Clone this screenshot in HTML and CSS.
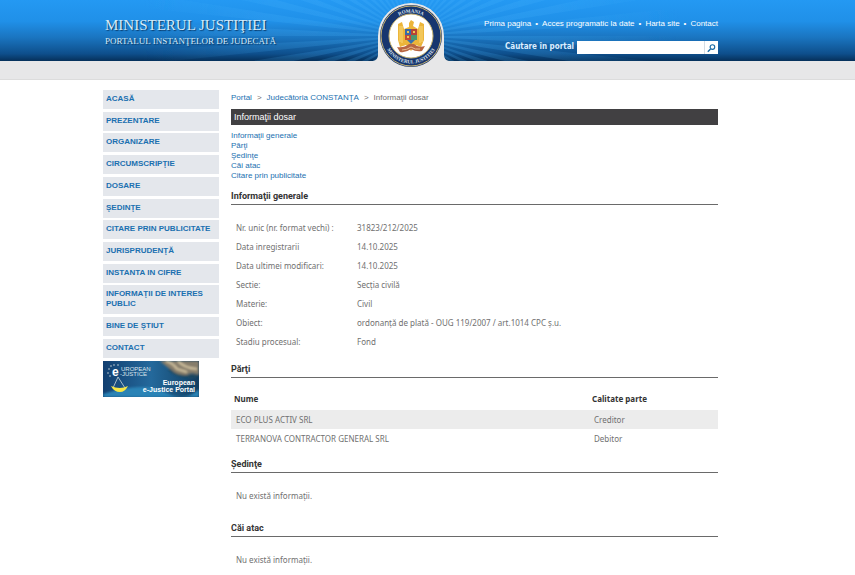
FILE: index.html
```html
<!DOCTYPE html>
<html lang="ro">
<head>
<meta charset="utf-8">
<meta name="viewport" content="width=device-width, initial-scale=1">
<title>Informaţii dosar</title>
<link rel="stylesheet" href="styles.css">
</head>
<body>
<header class="banner">
  <svg class="rays" viewBox="-411 -36 855 61" preserveAspectRatio="xMidYMax slice" aria-hidden="true">
    <defs>
      <radialGradient id="fade" gradientUnits="userSpaceOnUse" cx="0" cy="0" r="270">
        <stop offset="0" stop-color="#4db8ff" stop-opacity=".22"/>
        <stop offset=".5" stop-color="#4db8ff" stop-opacity=".16"/>
        <stop offset="1" stop-color="#4db8ff" stop-opacity="0"/>
      </radialGradient>
      <filter id="ray-soft"><feGaussianBlur stdDeviation=".6"/></filter>
    </defs>
    <g id="ray-group" fill="url(#fade)" filter="url(#ray-soft)"></g>
  </svg>
  <div class="shell banner-inner">
    <div class="brand">
      <div class="brand-name">MINISTERUL JUSTIŢIEI</div>
      <div class="brand-sub">PORTALUL INSTANŢELOR DE JUDECATĂ</div>
    </div>
    <svg class="seal" viewBox="0 0 84 69" role="img" aria-label="România, Ministerul Justiţiei">
      <path d="M0 69V61H4Q9 60 9 55V36A33 33 0 0 1 75 36V55Q75 60 80 61H84V69Z" fill="#e7e7e8"/>
      <circle cx="42" cy="36" r="31" fill="#17366f"/>
      <circle cx="42" cy="36" r="30" fill="none" stroke="#c9b46f" stroke-width="1"/>
      <circle cx="42" cy="36" r="22" fill="#fff" stroke="#c9b46f" stroke-width="1"/>
      <path id="arc-top" d="M18.500 36A23.500 23.500 0 0 1 65.500 36" fill="none"/>
      <path id="arc-bottom" d="M14.500 36A27.500 27.500 0 0 0 69.500 36" fill="none"/>
      <text class="seal-text"><textPath href="#arc-top" startOffset="50%">ROMANIA</textPath></text>
      <text class="seal-text"><textPath href="#arc-bottom" startOffset="50%">MINISTERUL JUSTITIEI</textPath></text>
      <path d="M40 23L42 20L45 22L44 26L49 29L51 22L55 24L55 40L52 47L47 45L42 51L37 45L31 47L29 40L29 24L33 22L35 29L40 27Z" fill="#ecb53a"/>
      <path d="M31 26V42M33 26V43M51 26V43M53 26V42" stroke="#f8d878" stroke-width="1"/>
      <path d="M36 29H42V35H36Z" fill="#3869a8"/>
      <path d="M42 29H48V35H42Z" fill="#b54337"/>
      <path d="M36 35H42V40H36Z" fill="#c14936"/>
      <path d="M42 35H48V40H42Z" fill="#4b966f"/>
      <path d="M38 40H46L42 44Z" fill="#3772ad"/>
      <path d="M38 31H40V33H38ZM44 31H46V33H44ZM38 36H40V38H38Z" fill="#edc551"/>
      <path d="M28 47Q35 48 40 44H45Q49 48 56 46L53 51Q47 52 42 49Q37 53 31 52Z" fill="#b86542"/>
      <path d="M33 50Q38 50 42 47Q46 50 51 49" fill="none" stroke="#e7bc8b"/>
    </svg>
    <div class="tools">
      <nav class="top-links" aria-label="Legături rapide">
        <a href="#">Prima pagina</a><span>•</span><a href="#">Acces programatic la date</a><span>•</span><a href="#">Harta site</a><span>•</span><a href="#">Contact</a>
      </nav>
      <form class="search">
        <label for="q">Căutare în portal</label>
        <input id="q" type="text">
        <button type="submit" aria-label="Caută">
          <svg viewBox="0 0 14 13" aria-hidden="true"><circle cx="8" cy="6" r="2.500" fill="none" stroke="#176aa5" stroke-width="1.200"/><path d="M6 8L3 11" stroke="#176aa5" stroke-width="1.500"/></svg>
        </button>
      </form>
    </div>
  </div>
</header>
<div class="strip"></div>
<div class="shell page">
  <aside class="side">
    <nav class="menu" aria-label="Meniu">
      <a href="#">ACASĂ</a>
      <a href="#">PREZENTARE</a>
      <a href="#">ORGANIZARE</a>
      <a href="#">CIRCUMSCRIPŢIE</a>
      <a href="#">DOSARE</a>
      <a href="#">ŞEDINŢE</a>
      <a href="#">CITARE PRIN PUBLICITATE</a>
      <a href="#">JURISPRUDENŢĂ</a>
      <a href="#">INSTANTA IN CIFRE</a>
      <a href="#">INFORMAŢII DE INTERES PUBLIC</a>
      <a href="#">BINE DE ŞTIUT</a>
      <a href="#">CONTACT</a>
    </nav>
    <a class="ejustice" href="#">
      <svg viewBox="0 0 96 36" role="img" aria-label="European e-Justice Portal">
        <defs>
          <linearGradient id="sea" x1="0" y1="0" x2="1" y2="0">
            <stop offset="0" stop-color="#123f70"/><stop offset=".5" stop-color="#24699c"/><stop offset="1" stop-color="#123e60"/>
          </linearGradient>
          <filter id="soft"><feGaussianBlur stdDeviation="1"/></filter>
        </defs>
        <rect width="96" height="36" fill="url(#sea)"/>
        <g filter="url(#soft)">
          <path d="M57 0H96V14Q88 11 84 14Q74 17 70 10Q65 7 57 0Z" fill="#867d6b"/>
          <path d="M63 0Q70 2 74 8L84 11M75 0Q81 7 94 8" fill="none" stroke="#d2c3a0" stroke-width="2"/>
          <path d="M66 8Q73 17 94 15" fill="none" stroke="#244b5c" stroke-width="2"/>
          <path d="M0 33Q40 20 61 31T96 28V36H0Z" fill="#2c83b6"/>
        </g>
        <g fill="#e9eee9"><circle cx="6" cy="8" r=".7"/><circle cx="8" cy="5" r=".7"/><circle cx="11" cy="4" r=".7"/><circle cx="15" cy="4" r=".7"/><circle cx="5" cy="12" r=".7"/><circle cx="7" cy="15" r=".7"/></g>
        <path d="M15 16L10 27M15 16L22 27" stroke="#cbd6d8" stroke-width=".8"/>
        <path d="M8 25Q17 29 25 25Q22 31 17 31Q11 31 8 25Z" fill="#f5e545"/>
        <text class="ej-e" x="9" y="15">e</text>
        <text class="ej-small" x="18" y="10">UROPEAN</text>
        <text class="ej-small" x="17" y="15">-JUSTICE</text>
        <text class="ej-title" x="92" y="24">European</text>
        <text class="ej-title" x="92" y="31">e-Justice Portal</text>
      </svg>
    </a>
  </aside>
  <main class="content">
    <nav class="crumbs" aria-label="Cale"><a href="#">Portal</a><span>&gt;</span><a href="#">Judecătoria CONSTANŢA</a><span>&gt;</span>Informaţii dosar</nav>
    <h1>Informaţii dosar</h1>
    <ul class="toc">
      <li><a href="#generale">Informaţii generale</a></li>
      <li><a href="#parti">Părţi</a></li>
      <li><a href="#sedinte">Şedinţe</a></li>
      <li><a href="#cai">Căi atac</a></li>
      <li><a href="#citare">Citare prin publicitate</a></li>
    </ul>
    <section id="generale">
      <h2>Informaţii generale</h2>
      <table class="facts">
        <tr><th scope="row">Nr. unic (nr. format vechi) :</th><td>31823/212/2025</td></tr>
        <tr><th scope="row">Data inregistrarii</th><td>14.10.2025</td></tr>
        <tr><th scope="row">Data ultimei modificari:</th><td>14.10.2025</td></tr>
        <tr><th scope="row">Sectie:</th><td>Secția civilă</td></tr>
        <tr><th scope="row">Materie:</th><td>Civil</td></tr>
        <tr><th scope="row">Obiect:</th><td>ordonanță de plată - OUG 119/2007 / art.1014 CPC ș.u.</td></tr>
        <tr><th scope="row">Stadiu procesual:</th><td>Fond</td></tr>
      </table>
    </section>
    <section id="parti">
      <h2>Părţi</h2>
      <table class="parties">
        <thead><tr><th scope="col">Nume</th><th scope="col">Calitate parte</th></tr></thead>
        <tbody>
          <tr><td>ECO PLUS ACTIV SRL</td><td>Creditor</td></tr>
          <tr><td>TERRANOVA CONTRACTOR GENERAL SRL</td><td>Debitor</td></tr>
        </tbody>
      </table>
    </section>
    <section id="sedinte">
      <h2>Şedinţe</h2>
      <p class="empty">Nu există informaţii.</p>
    </section>
    <section id="cai">
      <h2>Căi atac</h2>
      <p class="empty">Nu există informaţii.</p>
    </section>
  </main>
</div>
<script src="rays.js"></script>
</body>
</html>
```
FILE: styles.css
```css
* { box-sizing: border-box; }
body {
  margin: 0;
  background: #fff;
  color: #707070;
  font: 8px/10px "Noto Sans", sans-serif;
}
a { color: #1b70b0; text-decoration: none; }
.shell {
  max-width: 649px;
  margin: 0 auto;
  padding-right: 34px;
}
.banner {
  position: relative;
  background: linear-gradient(#2499f3 0, #2090e8 35%, #1a74bf 62%, #0e4f8c 88%, #06305a 100%);
}
.rays {
  position: absolute;
  inset: 0;
  width: 100%;
  height: 100%;
}
.banner-inner {
  position: relative;
  display: grid;
  grid-template-columns: 1fr 84px 1fr;
  height: 61px;
}
.brand {
  padding: 17px 0 0 2px;
  color: #d6ebf9;
  font-family: "Liberation Serif", serif;
  text-shadow: 1px 1px 1px #0a3a68;
  white-space: nowrap;
}
.brand-name { font-size: 15px; line-height: 16px; }
.brand-sub { font-size: 9px; line-height: 16px; }
.seal { width: 84px; height: 69px; }
.seal-text {
  fill: #dfe5ee;
  font: bold 5px "Liberation Serif", serif;
  text-anchor: middle;
}
.tools {
  display: flex;
  flex-direction: column;
  align-items: flex-end;
  padding-top: 19px;
  gap: 12px;
}
.top-links {
  display: flex;
  gap: 4px;
  color: #fff;
  font: 8px/10px "Liberation Sans", sans-serif;
  white-space: nowrap;
}
.top-links a { color: #fff; }
.search { display: flex; height: 13px; }
.search label {
  margin-right: 3px;
  color: #dceeff;
  font-family: "DejaVu Sans Condensed", "DejaVu Sans", sans-serif;
  font-weight: bold;
  line-height: 12px;
  white-space: nowrap;
}
.search input {
  width: 127px;
  height: 13px;
  border: 0;
  padding: 0 2px;
  background: #fff;
  font: inherit;
}
.search button {
  width: 14px;
  height: 13px;
  border: 0;
  border-left: 1px solid #d4dde5;
  padding: 0;
  background: #fff;
}
.search svg { display: block; width: 100%; height: 13px; }
.strip { height: 19px; background: #e7e7e8; border-bottom: 1px solid #dcdcdc; }
.page { display: flex; gap: 12px; padding-top: 10px; }
.side { flex: 0 0 116px; }
.menu {
  display: flex;
  flex-direction: column;
  justify-content: space-between;
  height: 268px;
}
.menu a {
  padding: 4px 3px 5px;
  background: #e4e7ec;
  font: bold 8px/10px "Liberation Sans", sans-serif;
}
.ejustice { display: block; width: 96px; margin-top: 3px; }
.ejustice svg { display: block; width: 96px; height: 36px; }
.ej-e { fill: #fff; font: bold 12px "Liberation Sans", sans-serif; }
.ej-small { fill: #dce6ec; font: 6px "Liberation Sans", sans-serif; }
.ej-title { fill: #fff; font: bold 7px "Liberation Sans", sans-serif; text-anchor: end; }
.content { flex: 1; min-width: 0; }
.crumbs { padding: 3px 0 6px; font: 8px/10px "Liberation Sans", sans-serif; }
.crumbs span { margin: 0 5px; }
h1 {
  margin: 0;
  padding: 3px;
  background: #414042;
  color: #fff;
  font: 9px/10px "Liberation Sans", sans-serif;
}
.toc {
  margin: 6px 0 10px;
  padding: 0;
  list-style: none;
  font: 8px/10px "Liberation Sans", sans-serif;
}
h2 {
  margin: 0;
  padding-bottom: 3px;
  border-bottom: 1px solid #6a6a6a;
  color: #333;
  font: bold 9px/10px Roboto, sans-serif;
}
table { width: 100%; border-collapse: collapse; }
th, td { text-align: left; font-weight: normal; }
.facts { margin: 13px 0; }
.facts th, .facts td { height: 19px; padding: 0 5px; }
.facts th { width: 121px; white-space: nowrap; }
.parties { margin: 10px 0 11px; }
.parties th {
  height: 22px;
  padding: 0 3px;
  color: #333;
  font-weight: bold;
}
.parties td { height: 19px; padding: 0 5px; }
.parties th:last-child, .parties td:last-child { width: 129px; }
.parties tbody tr:first-child { background: #ececec; }
.empty { margin: 18px 5px 22px; }
```
FILE: rays.js
```js
// Fan of light rays spreading from the seal
const group = document.getElementById("ray-group");
for (let deg = 0; deg < 360; deg += 6) {
  const ray = document.createElementNS("http://www.w3.org/2000/svg", "path");
  const point = d => {
    const r = d * Math.PI / 180;
    return `${Math.round(500 * Math.cos(r))} ${Math.round(500 * Math.sin(r))}`;
  };
  ray.setAttribute("d", `M0 0L${point(deg)}L${point(deg + 3)}Z`);
  group.append(ray);
}
```
